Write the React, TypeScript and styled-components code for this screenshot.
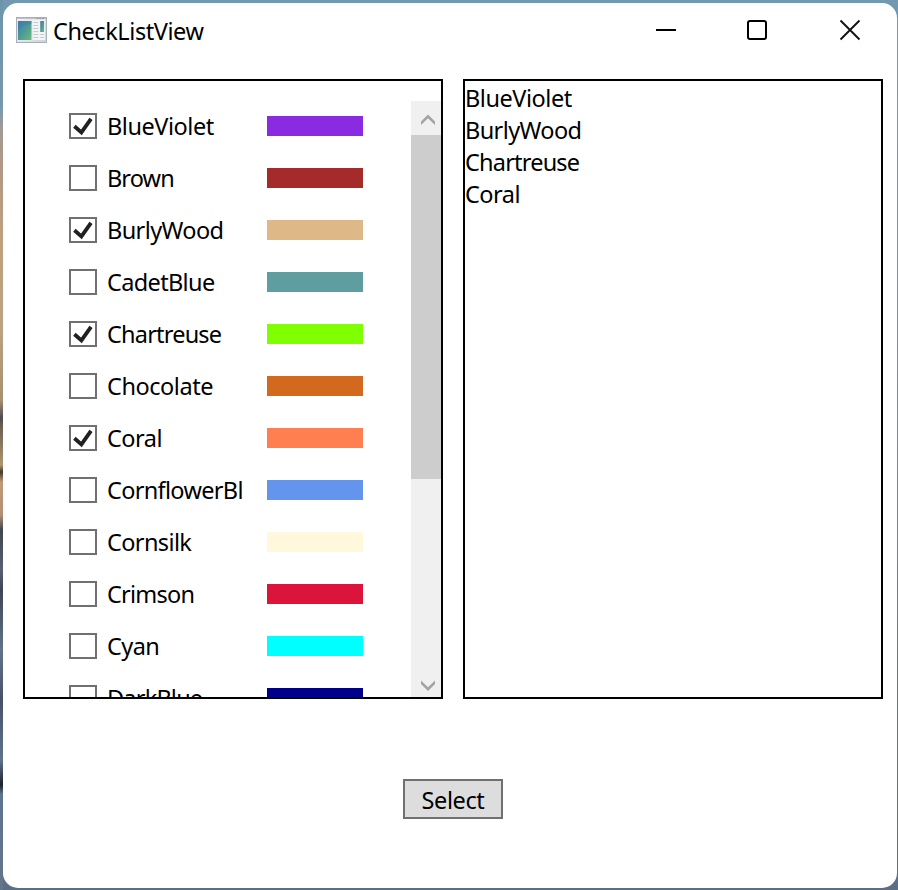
import React, { useState } from "react";
import styled, { createGlobalStyle } from "styled-components";

const GlobalStyle = createGlobalStyle`
  * { box-sizing: border-box; }
  html, body { margin: 0; padding: 0; }
  body {
    font-family: "Noto Sans", "Open Sans", sans-serif;
    font-size: 23.5px;
    color: #000;
    overflow: hidden;
  }
`;

const Desktop = styled.div`
  width: 898px;
  height: 890px;
  padding: 3px 1px 2px 3px;
  background:
    linear-gradient(#6e94ac, #7698ae 105px, #a29a94 130px, #b09888 160px, #bfa07c 240px,
      #baa283 330px, #a89170 400px, #4d4b50 418px, #655c4e 424px, #b09670 465px, #43392f 472px,
      #bd9a76 482px, #b38f76 515px, #41454f 530px, #566073 570px, #3d4656 590px, #62738a 650px,
      #46526a 700px, #60738c 760px, #1c222c 785px, #5f7491 794px, #657489 890px) left / 3px 100% no-repeat,
    linear-gradient(#7399b1, #6f95ae 300px, #617990 700px, #5c6e85) ;
`;

const Window = styled.main`
  display: flex;
  flex-direction: column;
  height: 885px;
  border-radius: 15px;
  background: #fff;
  overflow: hidden;
`;

const TitleBar = styled.header`
  display: flex;
  align-items: center;
  height: 56px;
  padding: 0 36px 2px 13px;
`;

const Title = styled.h1`
  flex: 1;
  margin: 1px 0 0 6px;
  font-size: 23.5px;
  font-weight: 400;
  line-height: 32px;
  letter-spacing: -0.42px;
`;

const Controls = styled.div`
  display: grid;
  grid-template-columns: 91px 93px 22px;
  svg { display: block; }
`;

const Panels = styled.div`
  display: flex;
  gap: 20px;
  padding: 20px 14px 0 20px;
`;

const Panel = styled.section`
  width: 420px;
  height: 620px;
  border: 2px solid #000;
  overflow: hidden;
`;

const CheckPanel = styled(Panel)`
  display: flex;
  padding-top: 20px;
`;

const CheckList = styled.div`
  flex: 1;
  padding-left: 44px;
  overflow: hidden;
`;

const Row = styled.label`
  display: grid;
  grid-template-columns: 38px 136px 96px;
  column-gap: 0;
  align-items: center;
  height: 52px;
  padding-bottom: 2px;
`;

const Box = styled.input`
  position: absolute;
  opacity: 0;
`;

const BoxFace = styled.span`
  display: block;
  width: 28px;
  height: 26px;
  border: 2px solid #707070;
  background: #fff;
  svg { display: block; }
`;

const Name = styled.span<{ $spacing: number }>`
  overflow: hidden;
  white-space: nowrap;
  line-height: 32px;
  letter-spacing: ${(p) => p.$spacing}px;
`;

const Swatch = styled.span<{ $color: string }>`
  margin-left: 24px;
  width: 96px;
  height: 20px;
  background: ${(p) => p.$color};
`;

const ScrollBar = styled.div`
  display: flex;
  flex-direction: column;
  width: 30px;
  height: 596px;
  background: #f0f0f0;
`;

const ScrollArrow = styled.div<{ $down?: boolean }>`
  display: flex;
  justify-content: center;
  align-items: center;
  height: 34px;
  padding: ${(p) => (p.$down ? 11 : 3)}px 0 0 4px;
`;

const ScrollTrack = styled.div`
  flex: 1;
`;

const ScrollThumb = styled.div`
  height: 344px;
  background: #cdcdcd;
`;

const ResultPanel = styled(Panel)`
  display: flex;
  flex-direction: column;
  padding-top: 1px;
`;

const Footer = styled.footer`
  display: flex;
  justify-content: center;
  padding: 80px 0 0 6px;
`;

const SelectButton = styled.button`
  width: 100px;
  height: 40px;
  padding: 1px 0 0;
  border: 2px solid #707070;
  background: #ddd;
  color: #000;
  font: inherit;
  line-height: 32px;
  letter-spacing: -0.4px;
`;

type Item = { name: string; color: string; spacing: number };

const items: Item[] = [
  { name: "BlueViolet", color: "#8a2be2", spacing: -0.45 },
  { name: "Brown", color: "#a52a2a", spacing: -0.9 },
  { name: "BurlyWood", color: "#deb887", spacing: -0.6 },
  { name: "CadetBlue", color: "#5f9ea0", spacing: -0.65 },
  { name: "Chartreuse", color: "#7fff00", spacing: -0.8 },
  { name: "Chocolate", color: "#d2691e", spacing: -0.45 },
  { name: "Coral", color: "#ff7f50", spacing: -0.5 },
  { name: "CornflowerBl", color: "#6495ed", spacing: -0.68 },
  { name: "Cornsilk", color: "#fff8dc", spacing: -0.62 },
  { name: "Crimson", color: "#dc143c", spacing: -0.75 },
  { name: "Cyan", color: "#00ffff", spacing: -0.6 },
  { name: "DarkBlue", color: "#00008b", spacing: -0.8 },
];

const AppIcon = () => (
  <svg width="31" height="26" viewBox="0 0 32 26" preserveAspectRatio="none">
    <defs>
      <linearGradient id="pane" x1="0" y1="0" x2="1" y2="1">
        <stop offset="0" stopColor="#3f7fb0" />
        <stop offset="0.5" stopColor="#4c9b94" />
        <stop offset="1" stopColor="#6fbb7c" />
      </linearGradient>
      <linearGradient id="frame" x1="0" y1="0" x2="1" y2="1">
        <stop offset="0" stopColor="#f1f3f6" />
        <stop offset="1" stopColor="#cfd2d7" />
      </linearGradient>
    </defs>
    <rect x="0.5" y="0.5" width="31" height="25" fill="url(#frame)" stroke="#a9afb8" />
    <path d="M1 1.5H31" stroke="#bcc2cb" />
    <path d="M21 1.5h9" stroke="#8f98a5" strokeDasharray="2 1" />
    <rect x="1.5" y="3.5" width="15" height="20" fill="#e8edf1" />
    <rect x="2" y="4" width="14" height="19" fill="url(#pane)" />
    <path d="M2 4H16V7C9 7 4 10 2 15Z" fill="#3b78ad" opacity="0.4" />
    <rect x="17" y="3" width="13" height="20" fill="#f3f4f6" />
    <path d="M18 5.5h5M18 8.5h5M18 11.5h5M18 14.5h5M18 17.5h5M18 20.5h5M25 17.5h4M25 20.5h4" stroke="#c5c8cd" />
    <rect x="25" y="4" width="4" height="11" fill="url(#pane)" />
  </svg>
);

const Check = () => (
  <svg width="24" height="22" viewBox="0 0 24 22">
    <path d="M3.4 11.3 10.4 17.4 20 3.8" fill="none" stroke="#212121" strokeWidth="3.8" />
  </svg>
);

const Chevron = ({ down = false }: { down?: boolean }) => (
  <svg width="14" height="12" viewBox="0 0 14 12">
    <path
      d={down ? "M0 0.5 7 7.3 14 0.5V4L7 11 0 4Z" : "M0 11V7.5L7 0.5 14 7.5V11L7 4.2Z"}
      fill="#a3a3a3"
    />
  </svg>
);

export default function App() {
  const initial = ["BlueViolet", "BurlyWood", "Chartreuse", "Coral"];
  const [checked, setChecked] = useState<string[]>(initial);
  const [selected, setSelected] = useState<string[]>(initial);

  const toggle = (name: string) =>
    setChecked((now) => (now.includes(name) ? now.filter((n) => n !== name) : [...now, name]));

  return (
    <Desktop>
      <GlobalStyle />
      <Window>
        <TitleBar>
          <AppIcon />
          <Title>CheckListView</Title>
          <Controls>
            <svg width="22" height="22" viewBox="0 0 22 22">
              <path d="M1 11H21" stroke="#000" strokeWidth="2" />
            </svg>
            <svg width="22" height="22" viewBox="0 0 22 22">
              <rect x="2" y="2" width="18" height="18" rx="2" fill="none" stroke="#000" strokeWidth="2" />
            </svg>
            <svg width="22" height="22" viewBox="0 0 22 22">
              <path d="M1.5 1.5 20.5 20.5M20.5 1.5 1.5 20.5" stroke="#111" strokeWidth="1.9" />
            </svg>
          </Controls>
        </TitleBar>
        <Panels>
          <CheckPanel>
            <CheckList>
              {items.map((item) => (
                <Row key={item.name}>
                  <BoxFace>
                    <Box
                      type="checkbox"
                      checked={checked.includes(item.name)}
                      onChange={() => toggle(item.name)}
                    />
                    {checked.includes(item.name) && <Check />}
                  </BoxFace>
                  <Name $spacing={item.spacing}>{item.name}</Name>
                  <Swatch $color={item.color} />
                </Row>
              ))}
            </CheckList>
            <ScrollBar>
              <ScrollArrow><Chevron /></ScrollArrow>
              <ScrollTrack><ScrollThumb /></ScrollTrack>
              <ScrollArrow $down><Chevron down /></ScrollArrow>
            </ScrollBar>
          </CheckPanel>
          <ResultPanel>
            {items
              .filter((item) => selected.includes(item.name))
              .map((item) => (
                <Name key={item.name} $spacing={item.spacing}>{item.name}</Name>
              ))}
          </ResultPanel>
        </Panels>
        <Footer>
          <SelectButton onClick={() => setSelected(checked)}>Select</SelectButton>
        </Footer>
      </Window>
    </Desktop>
  );
}
